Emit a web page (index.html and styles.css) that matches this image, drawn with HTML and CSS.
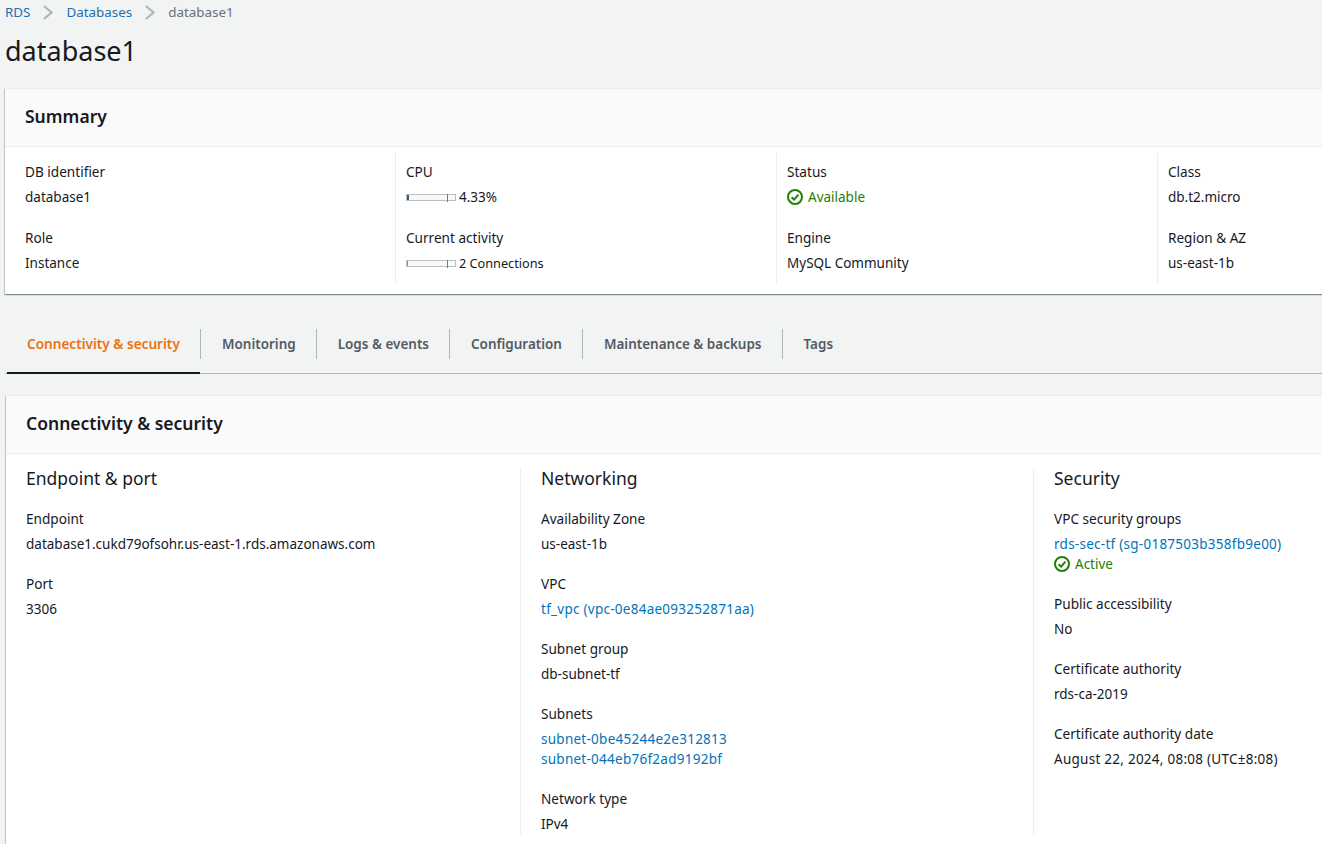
FILE: index.html
```html
<!DOCTYPE html>
<html lang="en">
<head>
<meta charset="utf-8">
<title>database1</title>
<link rel="stylesheet" href="styles.css">
</head>
<body>
<div class="page">
  <nav class="crumbs">
    <a href="#">RDS</a>
    <svg class="chev" width="12" height="16" viewBox="0 0 12 16"><path d="M2 2 9.5 8.5 2 15" fill="none" stroke="#aab7b8" stroke-width="2.2"/></svg>
    <a href="#">Databases</a>
    <svg class="chev" width="12" height="16" viewBox="0 0 12 16"><path d="M2 2 9.5 8.5 2 15" fill="none" stroke="#aab7b8" stroke-width="2.2"/></svg>
    <span class="crumb-cur">database1</span>
  </nav>
  <h1 class="title">database1</h1>

  <section class="card summary">
    <h2 class="card-head">Summary</h2>
    <div class="sum-grid">
      <div class="sum-col">
        <div class="kv"><div class="k">DB identifier</div><div class="v">database1</div></div>
        <div class="kv"><div class="k">Role</div><div class="v">Instance</div></div>
      </div>
      <div class="sum-col">
        <div class="kv"><div class="k">CPU</div><div class="v meter-row"><span class="meter"><span class="fill" style="width:4.33%"></span><span class="limit"></span></span><span class="meter-text">4.33%</span></div></div>
        <div class="kv"><div class="k">Current activity</div><div class="v meter-row"><span class="meter"><span class="fill faint" style="width:1%"></span><span class="limit"></span></span><span class="meter-text small">2 Connections</span></div></div>
      </div>
      <div class="sum-col">
        <div class="kv"><div class="k">Status</div><div class="v ok"><svg class="ok-icon" width="16" height="16" viewBox="0 0 16 16"><circle cx="8" cy="8" r="7" fill="none" stroke="#1d8102" stroke-width="2"/><path d="M4.6 8.2 7.1 10.6 11.4 5.6" fill="none" stroke="#1d8102" stroke-width="2"/></svg>Available</div></div>
        <div class="kv"><div class="k">Engine</div><div class="v">MySQL Community</div></div>
      </div>
      <div class="sum-col">
        <div class="kv"><div class="k">Class</div><div class="v">db.t2.micro</div></div>
        <div class="kv"><div class="k">Region &amp; AZ</div><div class="v">us-east-1b</div></div>
      </div>
    </div>
  </section>

  <div class="tabs">
    <a class="tab active" href="#">Connectivity &amp; security</a>
    <a class="tab" href="#">Monitoring</a>
    <a class="tab" href="#">Logs &amp; events</a>
    <a class="tab" href="#">Configuration</a>
    <a class="tab" href="#">Maintenance &amp; backups</a>
    <a class="tab" href="#">Tags</a>
  </div>

  <section class="card conn">
    <h2 class="card-head">Connectivity &amp; security</h2>
    <div class="conn-grid">
      <div class="conn-col">
        <h3 class="col-title">Endpoint &amp; port</h3>
        <div class="kv"><div class="k">Endpoint</div><div class="v">database1.cukd79ofsohr.us-east-1.rds.amazonaws.com</div></div>
        <div class="kv"><div class="k">Port</div><div class="v">3306</div></div>
      </div>
      <div class="conn-col">
        <h3 class="col-title">Networking</h3>
        <div class="kv"><div class="k">Availability Zone</div><div class="v">us-east-1b</div></div>
        <div class="kv"><div class="k">VPC</div><div class="v wide"><a href="#">tf_vpc (vpc-0e84ae093252871aa)</a></div></div>
        <div class="kv"><div class="k">Subnet group</div><div class="v">db-subnet-tf</div></div>
        <div class="kv"><div class="k">Subnets</div><div class="v wide"><a href="#">subnet-0be45244e2e312813</a></div><div class="vline wide"><a href="#">subnet-044eb76f2ad9192bf</a></div></div>
        <div class="kv"><div class="k">Network type</div><div class="v">IPv4</div></div>
      </div>
      <div class="conn-col">
        <h3 class="col-title">Security</h3>
        <div class="kv"><div class="k">VPC security groups</div><div class="v wide"><a href="#">rds-sec-tf (sg-0187503b358fb9e00)</a></div><div class="vline ok"><svg class="ok-icon" width="16" height="16" viewBox="0 0 16 16"><circle cx="8" cy="8" r="7" fill="none" stroke="#1d8102" stroke-width="2"/><path d="M4.6 8.2 7.1 10.6 11.4 5.6" fill="none" stroke="#1d8102" stroke-width="2"/></svg>Active</div></div>
        <div class="kv"><div class="k">Public accessibility</div><div class="v">No</div></div>
        <div class="kv"><div class="k">Certificate authority</div><div class="v">rds-ca-2019</div></div>
        <div class="kv"><div class="k">Certificate authority date</div><div class="v wide">August 22, 2024, 08:08 (UTC±8:08)</div></div>
      </div>
    </div>
  </section>
</div>
</body>
</html>
```

FILE: styles.css
```css
* { box-sizing: border-box; }
html, body { margin: 0; height: 844px; overflow: hidden; }
body {
  background: #f2f3f3;
  color: #16191f;
  font-family: "Noto Sans", "Open Sans", sans-serif;
  font-size: 13.5px;
  line-height: 20px;
}
a { color: #0073bb; text-decoration: none; }
.page { width: 1560px; padding-left: 5px; }

.crumbs { display: flex; align-items: center; height: 24px; font-size: 13.4px; }
.crumbs a { color: #1f6fb2; }
.chev { margin: 0 12px; }
.crumb-cur { color: #687078; }
.title { margin: 9px 0 19px; font-size: 27px; line-height: 36px; font-weight: 400; }

.card { background: #fff; box-shadow: 0 1px 1px 0 rgba(0,28,36,.3), 1px 1px 1px 0 rgba(0,28,36,.15), -1px 1px 1px 0 rgba(0,28,36,.15); border-top: 1px solid #eaeded; }
.card-head { margin: 0; padding: 0 20px; height: 58px; line-height: 55px; background: #fafafa; border-bottom: 1px solid #eaeded; font-size: 17.5px; font-weight: 600; }

.summary { height: 206px; }
.sum-grid { display: grid; grid-template-columns: 390px repeat(3, 381px); padding: 6px 0 0 0; }
.sum-col { padding: 9px 0 0 10px; height: 130px; border-left: 1px solid #eaeded; }
.sum-col:first-child { border-left: 0; padding-left: 20px; }
.kv { margin-bottom: 20px; }
.sum-col .kv { margin-bottom: 21px; height: 45px; }
.k { height: 20px; font-size: 13.6px; }
.v { margin-top: 5px; height: 20px; }
.wide { letter-spacing: .26px; }
.meter-row { display: flex; align-items: center; }
.meter { position: relative; display: inline-block; width: 50px; height: 7px; border: 1px solid #bcbfc2; background: #f7f8f8; margin-right: 3px; }
.fill { position: absolute; left: 0; top: 0; bottom: 0; background: #2a5f8a; min-width: 2px; }
.fill.faint { min-width: 1px; background: #7d99b0; }
.limit { position: absolute; left: 40px; top: -1px; height: 8px; width: 1px; background: #c7525a; }
.meter-text { font-size: 13.5px; }
.meter-text.small { font-size: 12.7px; }
.ok { color: #1d8102; display: flex; align-items: center; }
.ok-icon { margin-right: 5px; flex: none; }

.tabs { display: flex; margin: 30px 0 21px 0; height: 50px; border-bottom: 1px solid #aab7b8; padding-left: 2px; align-items: flex-start; font-weight: 600; font-size: 13.48px; }
.tab { color: #545b64; height: 30px; margin-top: 5px; padding: 0 20px 0 21px; line-height: 30px; border-left: 1px solid #aab7b8; }
.tab.active { border-left: 0; color: #ec7211; height: 50px; margin-top: 0; padding: 5px 0 0 20px; width: 193px; border-bottom: 2px solid #16191f; font-size: 13.6px; }

.conn { margin-left: 1px; height: 460px; }
.conn-grid { display: grid; grid-template-columns: 514px 513px 514px; }
.conn-col { margin-top: 15px; height: 365px; padding: 0 0 0 20px; border-left: 1px solid #eaeded; }
.conn-col:first-child { border-left: 0; }
.col-title { margin: -2px 0 20px; font-size: 17.5px; line-height: 22px; font-weight: 400; }
.vline { height: 20px; }
```
